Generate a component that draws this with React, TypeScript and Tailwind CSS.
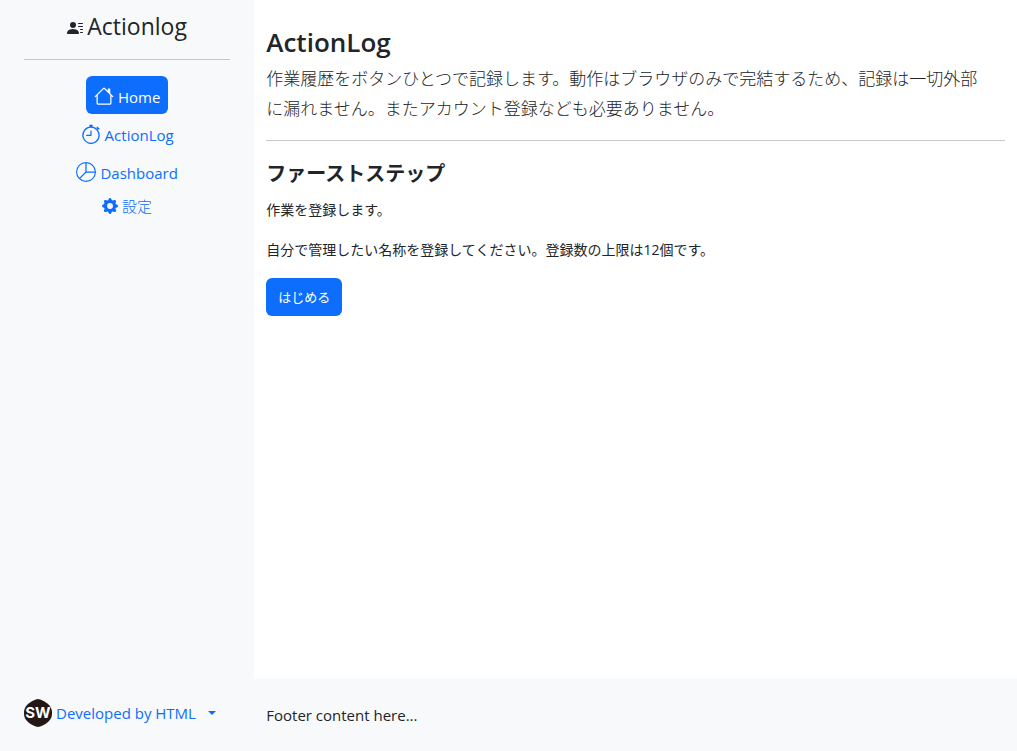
import { BsGearFill, BsHouse, BsPersonLinesFill, BsPieChart, BsStopwatch } from 'react-icons/bs';

function Logo() {
  return (
    <svg viewBox="0 0 28 28" className="h-7 w-7 shrink-0" aria-hidden="true">
      <path
        d="M14 0c2 0 8 3 10 5 3 3 4 5 4 9s-1 6-4 9c-2 2-8 5-10 5s-8-3-10-5c-3-3-4-5-4-9s1-6 4-9c2-2 8-5 10-5z"
        fill="#231815"
      />
      <text
        x="14"
        y="19"
        textAnchor="middle"
        fontSize="15"
        fontWeight="700"
        fill="#ffffff"
        fontFamily="Inter, sans-serif"
      >
        SW
      </text>
    </svg>
  );
}

function Sidebar() {
  return (
    <aside className="flex w-1/4 flex-col bg-[#f8f9fa] px-6 pt-3 pb-6">
      <h1 className="flex items-center justify-center gap-1 text-[23px] leading-7">
        <BsPersonLinesFill className="mt-1 h-4 w-4" />
        Actionlog
      </h1>
      <hr className="mt-[19px] mb-4 border-[#c4c6c8]" />
      <nav className="flex flex-col items-center text-[15px] leading-6 text-[#0d6efd]">
        <a href="#home" className="flex h-[38px] items-center gap-1 rounded-md bg-[#0d6efd] px-2 pt-1 text-white">
          <BsHouse className="mb-0.5 h-5 w-5" />
          Home
        </a>
        <a href="#actionlog" className="flex h-[38px] items-center gap-1 pt-1">
          <BsStopwatch className="mb-0.5 h-5 w-5" />
          ActionLog
        </a>
        <a href="#dashboard" className="flex h-[38px] items-center gap-1 pt-1">
          <BsPieChart className="mb-0.5 h-5 w-5" />
          Dashboard
        </a>
        <a href="#settings" className="flex h-8 items-center gap-1">
          <BsGearFill className="h-4 w-4" />
          <span className="font-light">設定</span>
        </a>
      </nav>
      <button type="button" className="mt-auto flex items-center gap-1 text-[15px] leading-7 text-[#0d6efd]">
        <Logo />
        Developed by HTML
        <span className="ml-2 border-x-4 border-t-4 border-x-transparent border-t-[#0d6efd]" />
      </button>
    </aside>
  );
}

export default function App() {
  return (
    <div className="flex min-h-screen bg-white font-['Open_Sans','Noto_Sans_CJK_JP',sans-serif] text-[#212529]" lang="ja">
      <Sidebar />
      <div className="flex w-3/4 flex-col">
        <main className="grow px-3 pt-6">
          <h2 className="text-[26px] leading-9 font-semibold">ActionLog</h2>
          <p className="mt-1 pr-3 text-[17px] leading-[30px] font-light">
            作業履歴をボタンひとつで記録します。動作はブラウザのみで完結するため、記録は一切外部に漏れません。またアカウント登録なども必要ありません。
          </p>
          <hr className="my-4 border-[#c7c8c9]" />
          <h3 className="text-xl leading-[34px] font-semibold">ファーストステップ</h3>
          <p className="mt-[7px] text-sm leading-6">作業を登録します。</p>
          <p className="mt-4 text-sm leading-6">
            自分で管理したい名称を登録してください。登録数の上限は12個です。
          </p>
          <button type="button" className="mt-4 rounded-md bg-[#0d6efd] px-3 py-[7px] text-[13px] leading-6 text-white">
            はじめる
          </button>
        </main>
        <footer className="bg-[#f8f9fa] px-3 py-6 text-[15px] leading-6">Footer content here...</footer>
      </div>
    </div>
  );
}
